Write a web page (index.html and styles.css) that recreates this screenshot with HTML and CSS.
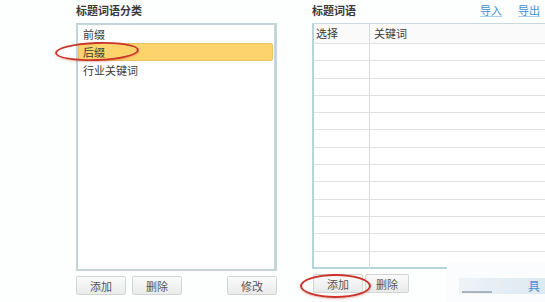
FILE: index.html
```html
<!DOCTYPE html>
<html lang="zh">
<head>
<meta charset="utf-8">
<link rel="stylesheet" href="styles.css">
</head>
<body>
<div class="page">
  <section class="panel left">
    <div class="title">标题词语分类</div>
    <div class="listbox">
      <div class="item">前缀</div>
      <div class="item selected">后缀</div>
      <div class="item">行业关键词</div>
    </div>
    <div class="btnrow">
      <button class="btn">添加</button>
      <button class="btn">删除</button>
      <span class="spacer"></span>
      <button class="btn">修改</button>
    </div>
  </section>
  <section class="panel right">
    <div class="title-row">
      <div class="title">标题词语</div>
      <div class="links"><a class="link">导入</a><a class="link">导出</a></div>
    </div>
    <div class="table">
      <div class="hrow"><div class="c1">选择</div><div class="c2">关键词</div></div>
      <div class="row"><div class="c1"></div><div class="c2"></div></div>
      <div class="row"><div class="c1"></div><div class="c2"></div></div>
      <div class="row"><div class="c1"></div><div class="c2"></div></div>
      <div class="row"><div class="c1"></div><div class="c2"></div></div>
      <div class="row"><div class="c1"></div><div class="c2"></div></div>
      <div class="row"><div class="c1"></div><div class="c2"></div></div>
      <div class="row"><div class="c1"></div><div class="c2"></div></div>
      <div class="row"><div class="c1"></div><div class="c2"></div></div>
      <div class="row"><div class="c1"></div><div class="c2"></div></div>
      <div class="row"><div class="c1"></div><div class="c2"></div></div>
      <div class="row"><div class="c1"></div><div class="c2"></div></div>
      <div class="row"><div class="c1"></div><div class="c2"></div></div>
      <div class="row last"><div class="c1"></div><div class="c2"></div></div>
    </div>
    <div class="btnrow">
      <button class="btn">添加</button>
      <button class="btn narrow">删除</button>
    </div>
  </section>
</div>
<div class="ring ring-left"></div>
<div class="ring ring-right"></div>
<div class="watermark">
  <div class="wm-band"></div>
  <div class="wm-smudge"></div>
  <div class="wm-glyph">具</div>
</div>
</body>
</html>
```

FILE: styles.css
```css
html, body {
  margin: 0;
  padding: 0;
  background: #fdfefe;
  overflow: hidden;
  width: 545px;
  height: 302px;
  font-family: "Noto Sans CJK SC", "Noto Sans", sans-serif;
  font-size: 11px;
  color: #333;
}

.page {
  display: flex;
  align-items: flex-start;
  padding-left: 76px;
  gap: 35px;
  width: 545px;
  box-sizing: border-box;
  overflow: hidden;
}

.panel {
  display: flex;
  flex-direction: column;
  flex-shrink: 0;
}

.left { width: 201px; }
.right { width: 260px; }

.title {
  height: 23px;
  line-height: 20px;
  font-weight: bold;
  color: #3a3a3a;
  font-size: 11px;
}

.title-row {
  display: flex;
  width: 233px;
  justify-content: space-between;
}

.links {
  display: flex;
  gap: 16px;
  padding-right: 5px;
  line-height: 20px;
}

.link {
  color: #3b8fd1;
  text-decoration: underline;
  text-decoration-color: #a9cdea;
  font-size: 11px;
}

.listbox {
  height: 248px;
  box-sizing: border-box;
  border: 2px solid #c3d5d9;
  border-right-width: 3px;
  background: #fff;
  padding-top: 0;
}

.item {
  height: 16px;
  line-height: 16px;
  padding-left: 4px;
  color: #3a3a3a;
  margin-right: 1px;
  border: 1px solid transparent;
}

.item.selected {
  background: #fdd46c;
  border-color: #e9c168;
  border-radius: 2px;
}

.btnrow {
  display: flex;
  gap: 6px;
  margin-top: 5px;
}

.spacer { flex: 1; }

.btn {
  width: 50px;
  height: 19px;
  padding: 0;
  font-family: "Noto Sans CJK SC", sans-serif;
  font-size: 11px;
  color: #555;
  background: linear-gradient(#fbfbfb, #e9eaea);
  border: 1px solid #d2d4d5;
  border-radius: 2px;
}

.right .btnrow { gap: 2px; margin-left: 1px; }
.btn.narrow { width: 44px; }

.table {
  box-sizing: border-box;
  border-left: 2px solid #b9d3da;
  border-top: 1px solid #c9d9dd;
  border-bottom: 2px solid #b9d3da;
  height: 246px;
  background: #fff;
}

.hrow, .row {
  display: flex;
  border-bottom: 1px solid #dfe2e3;
  box-sizing: border-box;
}

.hrow {
  height: 20px;
  line-height: 19px;
  background: #fafafa;
}

.row { height: 17.3px; }
.row.last { border-bottom: none; }

.c1 {
  width: 53px;
  border-right: 1px solid #d6dadb;
  padding-left: 2px;
  color: #3a3a3a;
}

.c2 {
  flex: 1;
  padding-left: 4px;
  color: #3a3a3a;
}

.ring {
  position: absolute;
  border: 2px solid #c9352b;
  border-radius: 50%;
  box-sizing: border-box;
  box-shadow: 0 1px 2px rgba(200, 60, 40, 0.35);
}

.ring-left {
  left: 55px;
  top: 42px;
  width: 84px;
  height: 19px;
  transform: rotate(-2deg);
}

.ring-right {
  left: 300px;
  top: 274px;
  width: 71px;
  height: 24px;
}

.watermark {
  position: absolute;
  left: 447px;
  top: 262px;
  width: 98px;
  height: 40px;
  background: #fbfcfd;
}

.wm-band {
  position: absolute;
  left: 12px;
  top: 16px;
  width: 86px;
  height: 16px;
  background: linear-gradient(90deg, #eef3f7, #dde8f0);
}

.wm-smudge {
  position: absolute;
  left: 15px;
  top: 29px;
  width: 30px;
  height: 2px;
  background: #7d8a95;
  opacity: 0.6;
}

.wm-glyph {
  position: absolute;
  left: 81px;
  top: 17px;
  color: #4a8fd6;
  font-size: 12px;
  line-height: 14px;
}
```
